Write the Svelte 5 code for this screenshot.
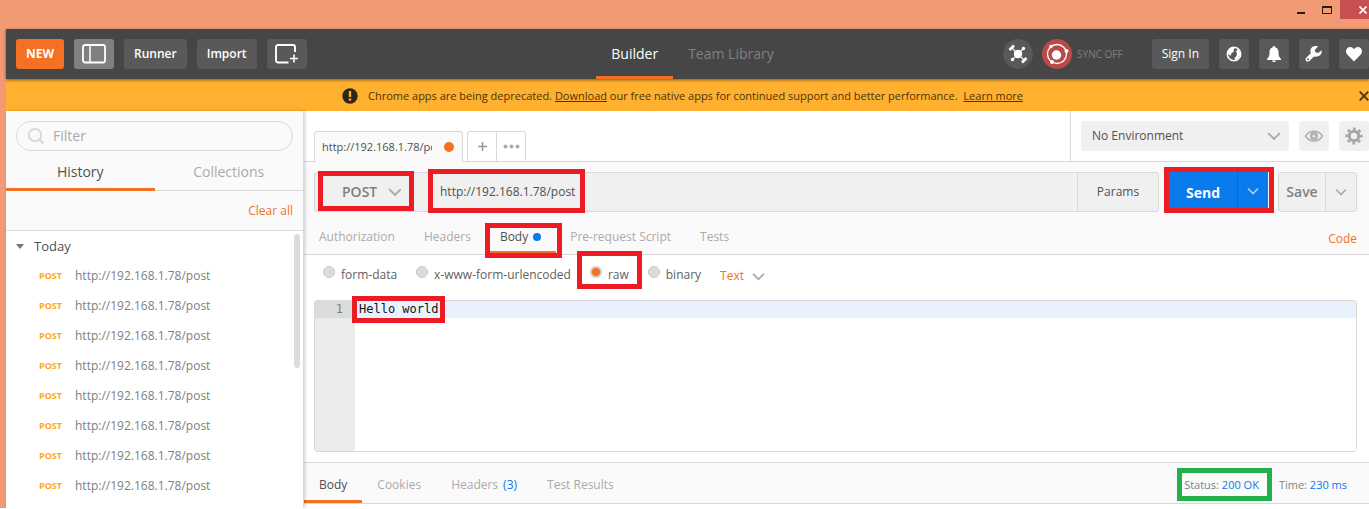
<script>
  let filter = $state('');
  let method = $state('POST');
  let url = $state('http://192.168.1.78/post');
  let mode = $state('raw');
  let body = $state('Hello world');
  let requestTab = $state('Body');
  let responseTab = $state('Body');

  const history = Array.from({ length: 8 }, () => ({ method: 'POST', url: 'http://192.168.1.78/post' }));
  const requestTabs = ['Authorization', 'Headers', 'Body', 'Pre-request Script', 'Tests'];
  const modes = ['form-data', 'x-www-form-urlencoded', 'raw', 'binary'];
  const responseTabs = [
    { name: 'Body' },
    { name: 'Cookies' },
    { name: 'Headers', count: 3 },
    { name: 'Test Results' }
  ];
</script>

{#snippet chevron(size)}
  <svg class="chevron" width={size} height={size} viewBox="0 0 12 12" aria-hidden="true">
    <path d="M1 3.5 6 8.5 11 3.5" fill="none" stroke="currentColor" stroke-width="1.7" />
  </svg>
{/snippet}

<div class="window">
  <div class="titlebar">
    <button class="win-btn minimize" aria-label="Minimize">
      <svg width="8" height="10" viewBox="0 0 8 10"><path d="M0 8h8" stroke="#2b1a14" stroke-width="2" /></svg>
    </button>
    <button class="win-btn maximize" aria-label="Maximize">
      <svg width="10" height="10" viewBox="0 0 10 10"><path d="M.5 1v7.500h9V1" fill="none" stroke="#2b1a14" /><path d="M0 2h10" stroke="#2b1a14" stroke-width="2" /></svg>
    </button>
    <button class="win-btn close" aria-label="Close">
      <svg width="8" height="8" viewBox="0 0 8 8"><path d="M.5 .5 7.500 7.500M7.500 .5 .5 7.500" stroke="#fff" stroke-width="1.600" /></svg>
    </button>
  </div>

  <div class="app">
    <header>
      <div class="tools">
        <button class="tool new">NEW</button>
        <button class="tool icon toggle" aria-label="Toggle sidebar">
          <svg width="24" height="20" viewBox="0 0 24 20" fill="none" stroke="#fff">
            <rect x="1" y="1" width="22" height="17.500" rx="2" stroke-width="1.800" /><path d="M8 1v17.500" stroke-width="1.500" />
          </svg>
        </button>
        <button class="tool runner">Runner</button>
        <button class="tool import">Import</button>
        <button class="tool icon" aria-label="New window">
          <svg width="24" height="20" viewBox="0 0 24 20" fill="none" stroke="#fff">
            <path d="M13.500 18.500H3a2 2 0 0 1-2-2V3a2 2 0 0 1 2-2h15a2 2 0 0 1 2 2v5" stroke-width="1.900" />
            <path d="M19 10.500v8M15 14.500h8" stroke-width="1.600" />
          </svg>
        </button>
      </div>
      <nav>
        <button class="page active">Builder</button>
        <button class="page">Team Library</button>
      </nav>
      <div class="account">
        <button class="round" aria-label="Interceptor">
          <svg width="20" height="20" viewBox="0 0 20 20" fill="#fff" stroke="#fff">
            <circle cx="10" cy="10" r="4.200" stroke="none" />
            <path d="M4 4 16 16M15 5 5 15" stroke-width="1.200" />
            <path d="M1.500 6 6 1.500M14 18.500 18.500 14" stroke-width="2.600" />
            <circle cx="15.500" cy="4.500" r="1.700" stroke="none" /><circle cx="4.500" cy="15.500" r="1.700" stroke="none" />
          </svg>
        </button>
        <button class="round sync" aria-label="Sync status">
          <svg width="24" height="24" viewBox="0 0 24 24" fill="#fff">
            <circle cx="12" cy="12" r="9.500" fill="none" stroke="#fff" stroke-width="1.300" />
            <circle cx="11.500" cy="13" r="4.700" /><circle cx="6" cy="4.500" r="1.800" /><circle cx="21.500" cy="9" r="2" /><circle cx="7" cy="20" r="2" />
          </svg>
        </button>
        <span class="sync-text">SYNC OFF</span>
        <button class="tool signin">Sign In</button>
        <button class="tool square" aria-label="Browse">
          <svg width="16" height="16" viewBox="0 0 16 16">
            <circle cx="8" cy="8" r="6.700" fill="none" stroke="#fff" stroke-width="1.600" />
            <path d="M2 4.500 5.500 1.500 9 1.800 7.500 4 8 5.500 5.500 7 5 9.500 3 9 1.500 7zM11.500 3l2.500 3 .3 3-2.300 3.500L9 14l-.5-2 2-2 .5-2.500L10 6z" fill="#fff" />
          </svg>
        </button>
        <button class="tool square" aria-label="Notifications">
          <svg width="16" height="18" viewBox="0 0 16 18"><path d="M8 1c.8 0 1.300.6 1.300 1.300 2.400.7 3.200 2.700 3.200 5 0 3.500.5 4.700 2.500 6.700v1H1v-1c2-2 2.500-3.200 2.500-6.700 0-2.300.8-4.300 3.200-5C6.700 1.600 7.200 1 8 1zM6 15.500h4c-.3 1.200-1 1.700-2 1.700s-1.700-.5-2-1.700z" fill="#fff" /></svg>
        </button>
        <button class="tool square" aria-label="Settings">
          <svg width="18" height="18" viewBox="0 0 18 18"><path d="M16.700 5.200 13 8 10.500 7.300 9.800 5 13 1.500C10 .4 6.500 1.500 5.600 4.500 5.200 6 5.500 7.200 5.800 8.300L1.200 12.700c-.9.900-.9 2.300 0 3.200s2.300.9 3.200 0L9 11.400c3.300 1 8.300-.8 7.700-6.200zM3 13.200a1 1 0 1 1 0 2 1 1 0 0 1 0-2z" fill="#fff" /></svg>
        </button>
        <button class="tool square" aria-label="Favourites">
          <svg width="18" height="16" viewBox="0 0 18 16"><path d="M9 15.500 2.200 8.400C.6 6.700.6 3.900 2.200 2.200 4 .4 7.200.6 9 3.300 10.800.6 14 .4 15.800 2.200c1.600 1.700 1.600 4.500 0 6.200z" fill="#fff" /></svg>
        </button>
      </div>
    </header>

    <div class="banner">
      <p>
        <svg width="16" height="16" viewBox="0 0 16 16"><circle cx="8" cy="8" r="7.700" fill="#2e261b" /><path d="M8 3v6M8 10.500v2.300" stroke="#ffb02e" stroke-width="2.400" /></svg>
        <span>Chrome apps are being deprecated. <a href="#download">Download</a> our free native apps for continued support and better performance.&nbsp; <a href="#more">Learn more</a></span>
      </p>
      <button aria-label="Dismiss">
        <svg width="10" height="10" viewBox="0 0 10 10"><path d="m.7.7 8.600 8.600M9.300.7.7 9.300" stroke="#4a3512" stroke-width="1.800" /></svg>
      </button>
    </div>

    <div class="columns">
      <aside>
        <label class="filter">
          <svg width="18" height="18" viewBox="0 0 18 18" fill="none" stroke="#d6d6d6"><circle cx="8" cy="8" r="6.200" stroke-width="1.800" /><path d="m12.500 12.500 4 4" stroke-width="2.200" /></svg>
          <input type="text" placeholder="Filter" aria-label="Filter" bind:value={filter} />
        </label>
        <div class="side-tabs">
          <button class="active">History</button>
          <button>Collections</button>
        </div>
        <div class="clear"><button>Clear all</button></div>
        <div class="history">
          <h2><svg width="8" height="5" viewBox="0 0 8 5"><path d="M0 0h8L4 5z" fill="#777" /></svg>Today</h2>
          <ul>
            {#each history as item}
              <li><a href="#request"><b>{item.method}</b><span>{item.url}</span></a></li>
            {/each}
          </ul>
          <div class="thumb"></div>
        </div>
      </aside>

      <main>
        <div class="top">
          <div class="open-tabs">
            <button class="open-tab"><span>http://192.168.1.78/post</span><i></i></button>
            <div class="tab-tools">
              <button aria-label="Add tab"><svg width="9" height="9" viewBox="0 0 9 9"><path d="M4.500 0v9M0 4.500h9" stroke="#999" stroke-width="1.500" /></svg></button>
              <button aria-label="Tab options"><svg width="17" height="5" viewBox="0 0 17 5" fill="#aaa"><circle cx="2.500" cy="2.500" r="2" /><circle cx="8.500" cy="2.500" r="2" /><circle cx="14.500" cy="2.500" r="2" /></svg></button>
            </div>
          </div>
          <div class="environment">
            <div class="env-select">
              <select aria-label="Environment"><option>No Environment</option></select>
              {@render chevron(14)}
            </div>
            <button aria-label="Environment quick look">
              <svg width="20" height="14" viewBox="0 0 20 14"><path d="M1.500 7c4-6.500 13-6.500 17 0-4 6.500-13 6.500-17 0z" fill="none" stroke="#b0b0b0" stroke-width="1.500" /><circle cx="10" cy="7" r="4" fill="#b0b0b0" /><circle cx="10" cy="7" r="1.500" fill="#f0f0f0" /><circle cx="11" cy="6.500" r=".8" fill="#b0b0b0" /></svg>
            </button>
            <button aria-label="Manage environments">
              <svg width="18" height="18" viewBox="0 0 18 18" fill="none" stroke="#a6a6a6"><circle cx="9" cy="9" r="4.700" stroke-width="3" /><circle cx="9" cy="9" r="7.300" stroke-width="2.600" stroke-dasharray="2.870 2.870" stroke-dashoffset="1.400" /></svg>
            </button>
          </div>
        </div>

        <div class="request">
          <div class="url-row">
            <div class="url-bar">
              <div class="method">
                <div class="method-pick marked">
                  <select aria-label="Method" bind:value={method}><option>POST</option><option>GET</option></select>
                  {@render chevron(14)}
                </div>
              </div>
              <div class="address">
                <div class="address-pick marked"><input type="text" aria-label="Request URL" bind:value={url} /></div>
              </div>
              <button class="params">Params</button>
            </div>
            <div class="send marked">
              <button class="send-main">Send</button>
              <button class="send-more" aria-label="Send options">{@render chevron(12)}</button>
            </div>
            <div class="save">
              <button class="save-main">Save</button>
              <button class="save-more" aria-label="Save options">{@render chevron(12)}</button>
            </div>
          </div>
          <div class="request-tabs">
            {#each requestTabs as tab}
              <button class:active={requestTab === tab} class:marked={tab === 'Body'} onclick={() => (requestTab = tab)}>
                {tab}{#if tab === 'Body'}<i></i>{/if}
              </button>
            {/each}
            <a class="code" href="#code">Code</a>
          </div>
        </div>

        <div class="body-panel">
          <div class="modes">
            {#each modes as name}
              <label class:marked={name === 'raw'}><input type="radio" name="mode" value={name} bind:group={mode} />{name}</label>
            {/each}
            <div class="format">
              <select aria-label="Format"><option>Text</option></select>
              {@render chevron(13)}
            </div>
          </div>
          <div class="editor">
            <div class="gutter"><span>1</span></div>
            <div class="code-area">
              <div class="text-mark marked"></div>
              <textarea aria-label="Request body" spellcheck="false" bind:value={body}></textarea>
            </div>
          </div>
        </div>

        <div class="response">
          <div class="response-tabs">
            {#each responseTabs as tab}
              <button class:active={responseTab === tab.name} onclick={() => (responseTab = tab.name)}>
                {tab.name}{#if tab.count}<em>({tab.count})</em>{/if}
              </button>
            {/each}
          </div>
          <div class="stats">
            <span class="status marked">Status: <b>200 OK</b></span>
            <span>Time: <b>230 ms</b></span>
          </div>
        </div>
      </main>
    </div>
  </div>
</div>

<style>
  :global(body) { background: #fff; }
  * { box-sizing: border-box; }
  .window { font: 12px/16px "Open Sans", sans-serif; color: #505050; background: #f19a74; overflow: hidden; }
  button, input, select, textarea { font: inherit; color: inherit; border: 0; margin: 0; padding: 0; background: none; outline: none; border-radius: 0; }
  select { appearance: none; width: 100%; }
  button { white-space: nowrap; }
  svg { display: block; flex: none; }
  p, h2, ul { margin: 0; padding: 0; }

  .marked { position: relative; }
  .marked::after { content: ""; position: absolute; border: 5px solid #ed1c24; pointer-events: none; z-index: 2; }

  .titlebar { display: flex; justify-content: flex-end; height: 29px; }
  .win-btn { height: 19px; display: flex; align-items: center; }
  .minimize { margin-right: 17px; }
  .maximize { margin-right: 8px; }
  .close { background: #c75050; width: 29px; justify-content: flex-end; padding-right: 2px; }
  .app { margin-left: 6px; background: #fff; }

  header { display: grid; grid-template-columns: 1fr auto 1fr; align-items: center; height: 50px; padding-left: 10px; background: #464646; color: #fff; position: relative; box-shadow: 0 1px 3px rgba(0, 0, 0, .5); z-index: 1; }
  .tools { display: flex; gap: 10px; }
  .tool { height: 30px; padding: 0 10px; border-radius: 3px; background: #595959; font-weight: 600; }
  .new { background: #f47023; font-weight: 700; }
  .icon { width: 40px; padding: 0; display: grid; place-items: center; }
  .toggle { background: #808080; }
  nav { display: flex; align-self: stretch; font-size: 14px; }
  .page { padding: 3px 15px 0; border-bottom: 3px solid transparent; color: #808080; }
  .page.active { color: #fff; border-color: #f47023; font-weight: 500; }
  .account { display: flex; align-items: center; justify-content: flex-end; }
  .round { width: 30px; height: 30px; border-radius: 50%; background: #595959; display: grid; place-items: center; margin-right: 9px; }
  .round.sync { background: #b94a48; margin-right: 5px; }
  .sync-text { font-size: 10px; color: #808080; margin-right: 29px; }
  .signin { font-weight: 400; }
  .square { width: 30px; padding: 0; margin-left: 10px; display: grid; place-items: center; }

  .banner { display: flex; align-items: center; height: 32px; padding-top: 1px; background: #ffb02e; color: #4a3512; font-size: 11px; }
  .banner p { flex: 1; display: flex; align-items: center; justify-content: center; gap: 10px; }
  .banner a { color: inherit; }

  .columns { display: flex; min-height: 397px; }
  aside { width: 298px; flex: none; display: flex; flex-direction: column; background: #fafafa; border-right: 1px solid #d9d9d9; box-shadow: 1px 0 3px rgba(0, 0, 0, .2); position: relative; z-index: 1; }
  .filter { display: flex; align-items: center; gap: 8px; height: 30px; margin: 10px 10px 6px; padding: 0 10px; border: 1px solid #d9d9d9; border-radius: 15px; font-size: 14px; }
  .filter input { flex: 1; min-width: 0; }
  .filter input::placeholder { color: #aaa; opacity: 1; }
  .side-tabs { display: flex; height: 34px; border-bottom: 1px solid #dcdcdc; font-size: 14px; }
  .side-tabs button { flex: 1; padding-bottom: 3px; color: #aaa; }
  .side-tabs .active { color: #505050; border-bottom: 3px solid #f47023; padding-bottom: 1px; margin-bottom: -1px; }
  .clear { display: flex; justify-content: flex-end; height: 40px; padding: 0 10px; color: #f47023; border-bottom: 1px solid #dcdcdc; }
  .history { flex: 1; background: #fff; position: relative; }
  h2 { display: flex; align-items: center; gap: 10px; padding-left: 10px; height: 30px; font-size: 13px; font-weight: 400; }
  ul { list-style: none; }
  li a { display: flex; align-items: center; height: 30px; padding-left: 33px; gap: 12px; color: #808080; text-decoration: none; }
  li b { font-size: 9px; color: #f9a825; width: 24px; }
  .thumb { position: absolute; right: 3px; top: 3px; width: 6px; height: 134px; border-radius: 3px; background: #dcdcdc; }

  main { flex: 1; min-width: 0; display: flex; flex-direction: column; }
  .top { display: flex; justify-content: space-between; height: 51px; border-bottom: 1px solid #d9d9d9; }
  .open-tabs { display: flex; align-items: flex-end; gap: 4px; padding-left: 10px; }
  .open-tab { display: flex; align-items: center; gap: 12px; width: 149px; height: 31px; padding: 0 8px 0 7px; margin-bottom: -1px; border: 1px solid #d9d9d9; border-bottom: 0; border-radius: 3px 3px 0 0; background: #fafafa; font-size: 11px; }
  .open-tab span { flex: 1; overflow: hidden; text-align: left; }
  .open-tab i { width: 10px; height: 10px; border-radius: 50%; background: #f47023; }
  .tab-tools { display: flex; height: 30px; border: 1px solid #d9d9d9; border-bottom: 0; border-radius: 3px 3px 0 0; }
  .tab-tools button { width: 28px; display: grid; place-items: center; }
  .tab-tools button + button { width: 29px; border-left: 1px solid #d9d9d9; }
  .environment { display: flex; gap: 10px; width: 299px; padding: 10px 0 0 10px; border-left: 1px solid #d9d9d9; }
  .environment button { width: 30px; height: 30px; border-radius: 3px; background: #f0f0f0; display: grid; place-items: center; }
  .env-select { flex: 1; height: 30px; display: flex; align-items: center; padding: 0 8px 0 11px; background: #f0f0f0; border-radius: 3px; }
  .chevron { color: #aaa; }

  .request { background: #fafafa; padding: 10px 12px 0 10px; border-bottom: 1px solid #d9d9d9; }
  .url-row { display: flex; gap: 10px; height: 40px; }
  .url-bar { flex: 1; display: flex; border: 1px solid #d9d9d9; border-radius: 3px; background: #f0f0f0; }
  .method { width: 115px; display: flex; }
  .method-pick { flex: 1; display: flex; align-items: center; padding: 0 28px 0 27px; font-size: 14px; font-weight: 600; color: #808080; }
  .method-pick::after { left: 3px; right: 16px; top: -2px; bottom: 0; }
  .address { flex: 1; display: flex; }
  .address-pick { width: 156px; display: flex; padding-left: 10px; }
  .address-pick::after { left: -2px; right: 1px; top: -4px; bottom: -2px; }
  .address-pick input { width: 100%; }
  .params { width: 81px; border-left: 1px solid #d9d9d9; }
  .send { display: flex; width: 99px; height: 38px; background: #097bed; color: #fff; }
  .send::after { inset: -5px -6px -3px -5px; }
  .send-main { flex: 1; font-size: 14px; font-weight: 700; border-right: 1px solid #0569ce; padding-top: 3px; }
  .send-more, .save-more { width: 30px; display: grid; place-items: center; }
  .send-more .chevron { color: #a9cff6; }
  .save { display: flex; width: 79px; border: 1px solid #d9d9d9; border-radius: 3px; background: #f0f0f0; color: #808080; }
  .save-main { flex: 1; font-size: 14px; font-weight: 600; border-right: 1px solid #d9d9d9; }
  .request-tabs { display: flex; height: 42px; margin-left: -9px; color: #aaa; }
  .request-tabs button { display: flex; align-items: center; padding: 11px 15px 0 14px; border-bottom: 3px solid transparent; }
  .request-tabs .active { color: #505050; border-color: #f47023; }
  .request-tabs .marked::after { inset: 11px -6px -7px -1px; }
  .request-tabs i { width: 8px; height: 8px; border-radius: 50%; background: #097bed; margin-left: 5px; }
  .code { margin-left: auto; align-self: center; padding-top: 11px; color: #f47023; text-decoration: none; }

  .body-panel { padding: 0 12px 10px 10px; }
  .modes { display: flex; align-items: center; height: 45px; padding: 0 9px 9px; color: #606060; }
  .modes label { display: flex; align-items: center; gap: 6px; margin-right: 19px; padding-top: 3px; }
  .modes .marked::after { inset: -12px -13px -6px -13px; }
  .modes input { appearance: none; width: 12px; height: 12px; margin-bottom: 5px; border: 1px solid #c9c9c9; border-radius: 50%; background: #dcdcdc; }
  .modes input:checked { background: #f47023; border: 2px solid #d0cdca; }
  .format { display: flex; align-items: center; gap: 8px; padding-top: 6px; color: #f47023; }
  .editor { display: flex; height: 152px; border: 1px solid #d9d9d9; border-radius: 3px; font: 12px/17px "DejaVu Sans Mono", monospace; }
  .gutter { width: 40px; background: #ebebeb; color: #808080; text-align: right; }
  .gutter span { display: block; padding-right: 12px; background: #dcdcdc; }
  .code-area { flex: 1; position: relative; display: flex; background: linear-gradient(#e8f2fe 17px, #fff 17px); }
  .text-mark { position: absolute; left: -3px; top: -5px; width: 93px; height: 27px; }
  .text-mark::after { inset: 0; }
  textarea { flex: 1; resize: none; padding: 0 4px; color: #111; }

  .response { display: flex; justify-content: space-between; align-items: center; height: 42px; border-top: 1px solid #d9d9d9; border-bottom: 1px solid #d9d9d9; background: #fafafa; }
  .response-tabs { display: flex; align-self: stretch; color: #aaa; }
  .response-tabs button { padding: 7px 15px 0; border-bottom: 3px solid transparent; }
  .response-tabs .active { color: #505050; border-color: #f47023; }
  .response-tabs em { font-style: normal; color: #097bed; margin-left: 5px; }
  .stats { display: flex; gap: 20px; padding: 4px 22px 0 0; font-size: 11px; color: #808080; }
  .stats b { font-weight: 400; color: #097bed; }
  .status::after { border-color: #22b14c; inset: -9px -13px -8px -7px; }
</style>
